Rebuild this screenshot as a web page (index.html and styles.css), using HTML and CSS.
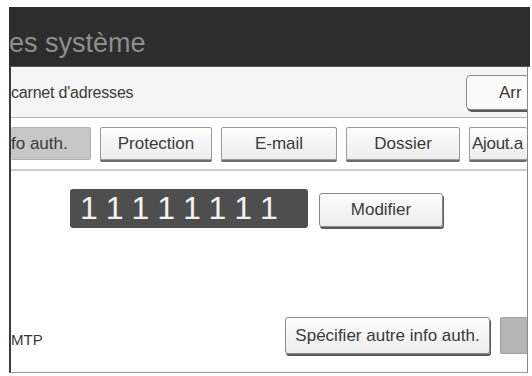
FILE: index.html
```html
<!DOCTYPE html>
<html lang="fr">
<head>
  <meta charset="UTF-8" />
  <title>Paramètres système</title>
  <link rel="stylesheet" href="styles.css">
</head>
<body>

  <!-- ECRAN -->
  <div class="screen">
    <div class="title-bar">es système</div>

    <div class="panel">
      <!-- ligne carnet -->
      <div class="book-row">
        <span class="book-label">carnet d'adresses</span>
        <div class="btn btn-stop">Arr</div>
      </div>

      <!-- onglets -->
      <div class="tabs">
        <div class="tab tab-active">fo auth.</div>
        <div class="tab tab-protect">Protection</div>
        <div class="tab tab-mail">E-mail</div>
        <div class="tab tab-folder">Dossier</div>
        <div class="tab tab-add">Ajout.a</div>
      </div>

      <!-- code -->
      <div class="code-row">
        <div class="code-box">11111111</div>
        <div class="btn btn-edit">Modifier</div>
      </div>

      <!-- bas -->
      <div class="bottom-row">
        <span class="smtp-label">MTP</span>
        <div class="btn btn-other">Spécifier autre info auth.</div>
        <div class="btn btn-grey"></div>
      </div>
    </div>
  </div>

</body>
</html>
```

FILE: styles.css
```css
/* Reset */
* {
  margin: 0; padding: 0; box-sizing: border-box;
}
body, html {
  height: 100%;
  font-family: 'Liberation Sans', Arial, sans-serif;
  background: #fff;
  color: #3a3a3a;
  overflow: hidden;
}
/* ECRAN */
.screen {
  margin: 7px 0 0 9px;
  width: 521px;
}
.title-bar {
  height: 60px;
  padding-top: 12px;
  line-height: 48px;
  background: #2d2d2d;
  border-bottom: 1px solid #555;
  color: #8e8e8e;
  font-size: 27px;
  white-space: nowrap;
  overflow: hidden;
}
.panel {
  width: 519px;
  border-left: 2px solid #3c3c3c;
  border-right: 1px solid #8a8a8a;
  border-bottom: 1px solid #999;
  overflow: hidden;
  padding-bottom: 17px;
}
/* BOUTONS */
.btn {
  flex-shrink: 0;
  background: linear-gradient(#fdfdfd, #ececec);
  border: 1px solid #8a8a8a;
  border-radius: 3px;
  box-shadow: 1px 2px 0 #5a5a5a;
  font-size: 17px;
  color: #3a3a3a;
  text-align: center;
  white-space: nowrap;
}
/* LIGNE CARNET */
.book-row {
  height: 51px;
  display: flex;
  align-items: center;
  background: #f5f5f5;
  border-bottom: 1px solid #b4b4b4;
}
.book-label {
  font-size: 16px;
  letter-spacing: -0.2px;
  width: 455px;
  flex-shrink: 0;
  margin-top: 2px;
}
.btn-stop {
  width: 61px;
  height: 35px;
  line-height: 33px;
  text-align: left;
  padding-left: 32px;
  margin-top: 1px;
  border-radius: 5px 0 0 5px;
  border-right: none;
  background: #fafafa;
}
/* ONGLETS */
.tabs {
  display: flex;
  gap: 9px;
  padding: 9px 0 9px;
  border-bottom: 2px solid #cfcfcf;
}
.tab {
  flex-shrink: 0;
  height: 33px;
  line-height: 31px;
  font-size: 17px;
  color: #3a3a3a;
  background: linear-gradient(#fdfdfd, #ededed);
  border: 1px solid #9a9a9a;
  border-radius: 2px;
  box-shadow: 0 2px 0 #6a6a6a;
  text-align: center;
  white-space: nowrap;
  overflow: hidden;
}
.tab-active {
  width: 80px;
  background: #c6c6c6;
  border-color: #b0b0b0;
  box-shadow: none;
  text-align: left;
  border-left: none;
}
.tab-protect { width: 112px; }
.tab-mail { width: 116px; }
.tab-folder { width: 114px; }
.tab-add {
  width: 58px;
  text-align: left;
  padding-left: 2px;
  border-right: none;
  letter-spacing: -0.3px;
}
/* CODE */
.code-row {
  display: flex;
  align-items: flex-start;
  margin-top: 18px;
  padding-left: 59px;
  gap: 11px;
}
.code-box {
  width: 238px;
  height: 39px;
  line-height: 39px;
  background: #4e4e4e;
  border-radius: 3px;
  color: #f2f2f2;
  font-size: 32px;
  letter-spacing: 10.3px;
  padding-left: 10px;
}
.btn-edit {
  width: 124px;
  height: 34px;
  line-height: 32px;
  margin-top: 4px;
}
/* BAS */
.bottom-row {
  display: flex;
  align-items: center;
  margin-top: 90px;
  height: 37px;
}
.smtp-label {
  flex-shrink: 0;
  width: 274px;
  font-size: 15px;
  margin-top: 6px;
}
.btn-other {
  width: 205px;
  height: 37px;
  line-height: 35px;
  margin-top: -2px;
}
.btn-grey {
  width: 27px;
  height: 37px;
  margin-left: 10px;
  margin-top: -2px;
  background: #b6b6b6;
  border-color: #a0a0a0;
  border-right: none;
  border-radius: 2px 0 0 2px;
  box-shadow: none;
}
```
